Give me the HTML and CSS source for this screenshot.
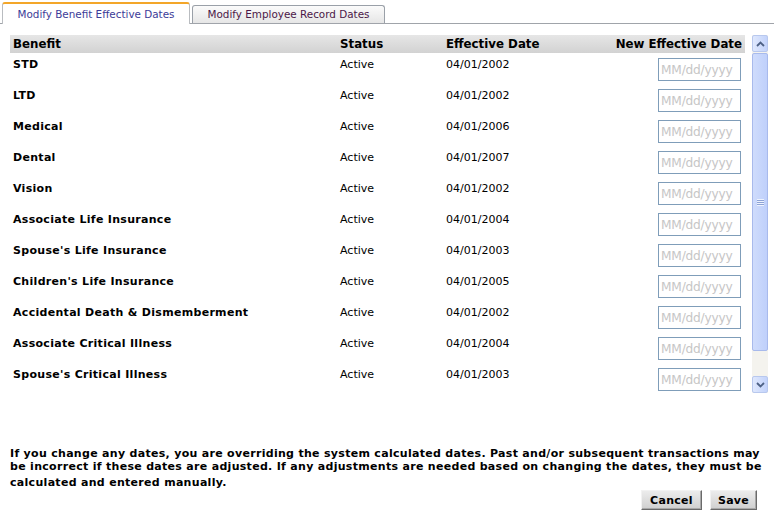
FILE: index.html
```html
<!DOCTYPE html>
<html>
<head>
<meta charset="utf-8">
<link rel="stylesheet" href="styles.css">
</head>
<body>
<div class="tabs">
  <div class="tab active">Modify Benefit Effective Dates</div>
  <div class="tab">Modify Employee Record Dates</div>
</div>
<div class="main">
  <div class="grid-wrap">
    <div class="row head">
      <div class="c1">Benefit</div>
      <div class="c2">Status</div>
      <div class="c3">Effective Date</div>
      <div class="c4">New Effective Date</div>
    </div>
    <div class="row"><div class="c1 b">STD</div><div class="c2">Active</div><div class="c3">04/01/2002</div><div class="c4"><input class="date" placeholder="MM/dd/yyyy"></div></div>
    <div class="row"><div class="c1 b">LTD</div><div class="c2">Active</div><div class="c3">04/01/2002</div><div class="c4"><input class="date" placeholder="MM/dd/yyyy"></div></div>
    <div class="row"><div class="c1 b">Medical</div><div class="c2">Active</div><div class="c3">04/01/2006</div><div class="c4"><input class="date" placeholder="MM/dd/yyyy"></div></div>
    <div class="row"><div class="c1 b">Dental</div><div class="c2">Active</div><div class="c3">04/01/2007</div><div class="c4"><input class="date" placeholder="MM/dd/yyyy"></div></div>
    <div class="row"><div class="c1 b">Vision</div><div class="c2">Active</div><div class="c3">04/01/2002</div><div class="c4"><input class="date" placeholder="MM/dd/yyyy"></div></div>
    <div class="row"><div class="c1 b">Associate Life Insurance</div><div class="c2">Active</div><div class="c3">04/01/2004</div><div class="c4"><input class="date" placeholder="MM/dd/yyyy"></div></div>
    <div class="row"><div class="c1 b">Spouse's Life Insurance</div><div class="c2">Active</div><div class="c3">04/01/2003</div><div class="c4"><input class="date" placeholder="MM/dd/yyyy"></div></div>
    <div class="row"><div class="c1 b">Children's Life Insurance</div><div class="c2">Active</div><div class="c3">04/01/2005</div><div class="c4"><input class="date" placeholder="MM/dd/yyyy"></div></div>
    <div class="row"><div class="c1 b">Accidental Death &amp; Dismemberment</div><div class="c2">Active</div><div class="c3">04/01/2002</div><div class="c4"><input class="date" placeholder="MM/dd/yyyy"></div></div>
    <div class="row"><div class="c1 b">Associate Critical Illness</div><div class="c2">Active</div><div class="c3">04/01/2004</div><div class="c4"><input class="date" placeholder="MM/dd/yyyy"></div></div>
    <div class="row"><div class="c1 b">Spouse's Critical Illness</div><div class="c2">Active</div><div class="c3">04/01/2003</div><div class="c4"><input class="date" placeholder="MM/dd/yyyy"></div></div>
  </div>
  <div class="sbar">
    <div class="sbtn"><svg width="9" height="6" viewBox="0 0 9 6"><path d="M1 5 L4.5 1.5 L8 5" fill="none" stroke="#4d6185" stroke-width="1.8"/></svg></div>
    <div class="thumb"><div class="grip"></div></div>
    <div class="track"></div>
    <div class="sbtn"><svg width="9" height="6" viewBox="0 0 9 6"><path d="M1 1 L4.5 4.5 L8 1" fill="none" stroke="#4d6185" stroke-width="1.8"/></svg></div>
  </div>
</div>
<p class="note">If you change any dates, you are overriding the system calculated dates. Past and/or subsequent transactions may be incorrect if these dates are adjusted. If any adjustments are needed based on changing the dates, they must be</p>
<p class="note last">calculated and entered manually.</p>
<div class="actions">
  <button class="btn cancel">Cancel</button>
  <button class="btn save">Save</button>
</div>
</body>
</html>
```

FILE: styles.css
```css
html, body {
  margin: 0;
  padding: 0;
  background: #fff;
}
body {
  font-family: "DejaVu Sans", Verdana, sans-serif;
  font-size: 11px;
  color: #000;
  width: 774px;
  height: 510px;
  overflow: hidden;
}
.tabs {
  display: flex;
  align-items: flex-end;
  gap: 2px;
  padding-left: 2px;
  height: 23px;
  border-bottom: 1px solid #a0a4aa;
  box-sizing: content-box;
}
.tab {
  box-sizing: border-box;
  height: 18px;
  width: 193px;
  border: 1px solid #9aa0a8;
  border-bottom: none;
  border-radius: 3px 3px 0 0;
  background: linear-gradient(#fbfbfb, #e6e6e6);
  text-align: center;
  font-family: "DejaVu Sans", Tahoma, sans-serif;
  font-size: 10.4px;
  line-height: 17px;
  color: #4b1747;
}
.tab.active {
  width: 188px;
  height: 22px;
  background: #fff;
  border-color: #b9bcc0;
  border-top: 2px solid #f3a629;
  color: #3c3c98;
  line-height: 21px;
  position: relative;
  top: 1px;
}
.main {
  display: flex;
  padding: 11px 6px 0 10px;
  gap: 7px;
  height: 359px;
  overflow: hidden;
}
.grid-wrap {
  width: 735px;
  flex: none;
}
.row {
  display: grid;
  grid-template-columns: 327px 106px 1fr auto;
  height: 31px;
  align-items: start;
}
.row > div {
  padding: 5px 3px 0 3px;
  line-height: 14px;
  white-space: nowrap;
}
.row .c4 {
  padding-top: 5px;
  text-align: right;
  padding-right: 4px;
}
.b {
  font-weight: bold;
  letter-spacing: 0.3px;
}
.row.head {
  height: 18px;
  background: linear-gradient(#e6e6e6, #d2d2d2);
  font-weight: bold;
  font-size: 11.8px;
  align-items: center;
}
.row.head > div {
  padding-top: 1px;
  line-height: 17px;
}
.row.head .c4 {
  padding-right: 3px;
}
.date {
  box-sizing: border-box;
  width: 83px;
  height: 23px;
  border: 1px solid #7f9db9;
  padding: 2px 2px;
  font-family: "DejaVu Sans", Tahoma, sans-serif;
  font-size: 12.2px;
  letter-spacing: -0.2px;
  margin: 0 0 0 auto;
  outline: none;
  display: block;
}
.date::placeholder {
  color: #c6c6c6;
}
.sbar {
  width: 16px;
  height: 358px;
  display: flex;
  flex-direction: column;
  background: #f4f3ee;
  flex: none;
}
.sbtn {
  box-sizing: border-box;
  height: 17px;
  border: 1px solid #b8c8ee;
  border-radius: 2px;
  background: linear-gradient(90deg, #dfe8fd, #c3d3fb);
  display: flex;
  align-items: center;
  justify-content: center;
}
.thumb {
  box-sizing: border-box;
  height: 298px;
  margin-top: 1px;
  border: 1px solid #a8baec;
  border-radius: 2px;
  background: linear-gradient(90deg, #cfdcfc, #bfd0fb);
  display: flex;
  align-items: center;
  justify-content: center;
}
.grip {
  width: 7px;
  height: 7px;
  background: repeating-linear-gradient(#eef3fe 0 1px, #8da3d6 1px 2px);
}
.track {
  flex: 1;
}
.note {
  margin: 0;
  padding: 0 7px 0 10px;
  font-weight: bold;
  font-size: 11px;
  letter-spacing: 0.3px;
  line-height: 13px;
  color: #000;
}
.main + .note {
  margin-top: 53px;
}
.note.last {
  margin-top: 3px;
}
.actions {
  display: flex;
  justify-content: flex-end;
  gap: 8px;
  padding-right: 17px;
  margin-top: 1px;
}
.btn {
  box-sizing: border-box;
  font-family: "DejaVu Sans", Verdana, sans-serif;
  font-weight: bold;
  font-size: 11px;
  letter-spacing: 0.3px;
  height: 20px;
  padding: 0;
  border: 1px solid;
  border-color: #f2f2f2 #6a6a6a #6a6a6a #f2f2f2;
  background: linear-gradient(#ececec, #cfcfcf);
  color: #000;
  box-shadow: inset -1px -1px 0 #a8a8a8;
}
.btn.cancel {
  width: 61px;
}
.btn.save {
  width: 47px;
}
```
